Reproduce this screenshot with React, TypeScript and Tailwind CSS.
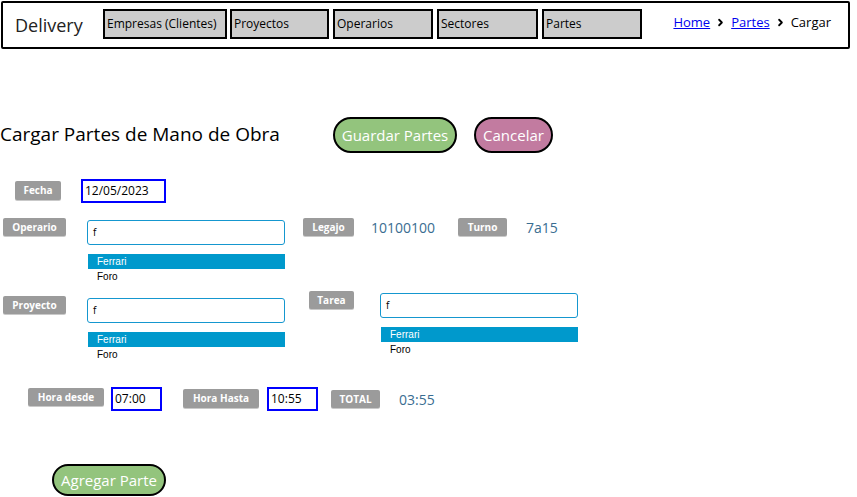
import { ChevronRight } from 'lucide-react'

const font = { fontFamily: '"Open Sans", "Noto Sans", sans-serif' }

function Tag({ text, className }: { text: string; className: string }) {
  return (
    <div
      className={`bg-[#9b9b9b] rounded-[2px] text-white font-bold text-[10px] flex items-center justify-center shadow-[0_1px_0_#c9c9c9] ${className}`}
    >
      {text}
    </div>
  )
}

function Combo({ className }: { className?: string }) {
  return (
    <div className={`w-[198px] ${className ?? ''}`}>
      <div className="h-[25px] border border-[#1597cf] rounded-[3px] flex items-center pl-[5px] text-[10px] text-black">f</div>
      <div className="mt-[9px] ml-[1px] text-[10px] font-['Liberation_Sans',sans-serif]">
        <div className="h-[15px] bg-[#0099cc] text-white pl-[9px] flex items-center">Ferrari</div>
        <div className="h-[14px] text-black pl-[9px] flex items-center">Foro</div>
      </div>
    </div>
  )
}

function BlueInput({ value, className }: { value: string; className: string }) {
  return (
    <div className={`h-[24px] border-2 border-[#0000ff] text-[12px] text-black flex items-center pl-[2px] ${className}`}>
      {value}
    </div>
  )
}

export default function App() {
  const nav = [
    { name: 'Empresas (Clientes)', w: 'w-[124px]', ml: 'ml-0' },
    { name: 'Proyectos', w: 'w-[99px]', ml: 'ml-[3px]' },
    { name: 'Operarios', w: 'w-[100px]', ml: 'ml-[4px]' },
    { name: 'Sectores', w: 'w-[101px]', ml: 'ml-[4px]' },
    { name: 'Partes', w: 'w-[100px]', ml: 'ml-[4px]' },
  ]

  return (
    <div className="w-[857px] h-[497px] bg-white overflow-hidden flex flex-col" style={font}>
      {/* header */}
      <div className="mt-[1px] ml-[1px] w-[849px] h-[48px] border-2 border-black rounded-[2px] flex items-start">
        <div className="w-[100px] pl-[12px] pt-[10px] text-[18px] leading-[24px] text-[#222]">Delivery</div>
        {nav.map((n) => (
          <div
            key={n.name}
            className={`${n.w} ${n.ml} mt-[6px] h-[30px] bg-[#cccccc] border-2 border-black text-[12px] text-black whitespace-nowrap flex items-center pl-[2px]`}
          >
            {n.name}
          </div>
        ))}
        <div className="ml-auto mr-[17px] mt-[10px] flex items-center text-[13px] text-black">
          <a href="#" className="text-[#0000ee] underline">Home</a>
          <ChevronRight size={11} strokeWidth={4} className="mx-[5px]" />
          <a href="#" className="text-[#0000ee] underline">Partes</a>
          <ChevronRight size={11} strokeWidth={4} className="mx-[5px]" />
          <span>Cargar</span>
        </div>
      </div>

      {/* title row */}
      <div className="mt-[69px] flex items-start">
        <div className="w-[333px] h-[33px] flex items-center text-[19px] text-black">Cargar Partes de Mano de Obra</div>
        <button className="-mt-px w-[124px] h-[36px] bg-[#93c47d] border-2 border-black rounded-full text-white text-[15px]">
          Guardar Partes
        </button>
        <button className="-mt-px ml-[17px] w-[79px] h-[36px] bg-[#c27ba0] border-2 border-black rounded-full text-white text-[15px]">
          Cancelar
        </button>
      </div>

      {/* fecha */}
      <div className="mt-[26px] flex items-start">
        <Tag text="Fecha" className="ml-[15px] mt-[2px] w-[46px] h-[19px]" />
        <BlueInput value="12/05/2023" className="ml-[20px] w-[85px]" />
      </div>

      {/* operario */}
      <div className="mt-[15px] flex items-start">
        <Tag text="Operario" className="ml-[3px] w-[63px] h-[18px]" />
        <Combo className="ml-[21px] mt-[2px]" />
        <Tag text="Legajo" className="ml-[18px] w-[51px] h-[18px]" />
        <div className="ml-[17px] w-[87px] h-[19px] flex items-center text-[14px] text-[#3a6d91]">10100100</div>
        <Tag text="Turno" className="w-[49px] h-[18px]" />
        <div className="ml-[19px] h-[19px] flex items-center text-[14px] text-[#3a6d91]">7a15</div>
      </div>

      {/* proyecto / tarea */}
      <div className="mt-[8px] flex items-start">
        <Tag text="Proyecto" className="ml-[3px] mt-[5px] w-[63px] h-[18px]" />
        <Combo className="ml-[21px] mt-[7px]" />
        <Tag text="Tarea" className="ml-[24px] w-[45px] h-[18px]" />
        <Combo className="ml-[26px] mt-[2px]" />
      </div>

      {/* horas */}
      <div className="mt-[26px] flex items-start">
        <Tag text="Hora desde" className="ml-[28px] mt-[1px] w-[76px] h-[18px]" />
        <BlueInput value="07:00" className="ml-[7px] w-[51px]" />
        <Tag text="Hora Hasta" className="ml-[21px] mt-[2px] w-[76px] h-[19px]" />
        <BlueInput value="10:55" className="ml-[8px] w-[51px]" />
        <Tag text="TOTAL" className="ml-[13px] mt-[3px] w-[49px] h-[18px]" />
        <div className="ml-[19px] mt-[2px] h-[20px] flex items-center text-[14px] text-[#3a6d91]">03:55</div>
      </div>

      {/* agregar */}
      <div className="mt-[53px] flex">
        <button className="ml-[52px] w-[114px] h-[32px] bg-[#93c47d] border-2 border-black rounded-full text-white text-[15px]">
          Agregar Parte
        </button>
      </div>
    </div>
  )
}
